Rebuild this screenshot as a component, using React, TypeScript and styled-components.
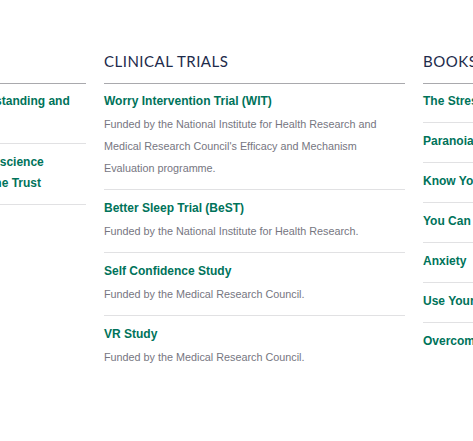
import React from "react";
import styled, { createGlobalStyle } from "styled-components";

const GlobalStyle = createGlobalStyle`
  html, body {
    margin: 0;
    padding: 0;
    background: #ffffff;
  }
  body {
    font-family: "Liberation Sans", Arial, sans-serif;
  }
`;

const Page = styled.div`
  width: 473px;
  height: 441px;
  overflow: hidden;
  background: #ffffff;
`;

const Columns = styled.div`
  display: flex;
  align-items: flex-start;
  gap: 18px;
  margin-left: -215px;
  padding-top: 51px;
  width: max-content;
`;

const Column = styled.section`
  width: 301px;
  flex: 0 0 301px;
`;

const Heading = styled.h2`
  margin: 0;
  padding-bottom: 12px;
  height: 20px;
  border-bottom: 1px solid #a9a9ad;
  font-family: Lato, "Open Sans", sans-serif;
  font-weight: 400;
  font-size: 15px;
  line-height: 20px;
  letter-spacing: 0.5px;
  color: #1d2b4b;
  text-transform: uppercase;
`;

const List = styled.ul`
  list-style: none;
  margin: 0;
  padding: 0;
`;

const Item = styled.li`
  padding: 8px 0 10px;
  border-bottom: 1px solid #e1e1e3;

  &:first-child {
    padding-top: 7px;
  }

  &:last-child {
    border-bottom: none;
  }
`;

const Title = styled.a`
  display: block;
  font-family: "Liberation Sans", Arial, sans-serif;
  font-weight: 700;
  font-size: 12px;
  line-height: 21px;
  color: #00735a;
  text-decoration: none;
`;

const Line = styled.span`
  display: block;
  white-space: nowrap;
`;

const Desc = styled.p`
  margin: 1px 0 0;
  font-family: "Liberation Sans", Arial, sans-serif;
  font-size: 10.8px;
  line-height: 22px;
  color: #76767f;
`;

type Entry = { title: string[]; desc?: string[] };

const leftItems: Entry[] = [
  { title: ["The Psychosis Research Unit: Understanding and", "treating paranoia"] },
  { title: ["Departments of Psychiatry and Neuroscience", "Funding by the Oxford Health Medicine Trust"] },
  { title: ["Contact"] },
];

const trials: Entry[] = [
  {
    title: ["Worry Intervention Trial (WIT)"],
    desc: [
      "Funded by the National Institute for Health Research and",
      "Medical Research Council's Efficacy and Mechanism",
      "Evaluation programme.",
    ],
  },
  {
    title: ["Better Sleep Trial (BeST)"],
    desc: ["Funded by the National Institute for Health Research."],
  },
  {
    title: ["Self Confidence Study"],
    desc: ["Funded by the Medical Research Council."],
  },
  {
    title: ["VR Study"],
    desc: ["Funded by the Medical Research Council."],
  },
];

const books: Entry[] = [
  { title: ["The Stressed Sex"] },
  { title: ["Paranoia: The 21st Century Fear"] },
  { title: ["Know Your Mind"] },
  { title: ["You Can Be Happy"] },
  { title: ["Anxiety"] },
  { title: ["Use Your Head"] },
  { title: ["Overcoming Paranoid and Suspicious Thoughts"] },
];

const Block: React.FC<{ heading: string; items: Entry[] }> = ({ heading, items }) => (
  <Column>
    <Heading>{heading}</Heading>
    <List>
      {items.map((it, i) => (
        <Item key={i}>
          <Title href="#">
            {it.title.map((t, j) => (
              <Line key={j}>{t}</Line>
            ))}
          </Title>
          {it.desc && (
            <Desc>
              {it.desc.map((d, j) => (
                <Line key={j}>{d}</Line>
              ))}
            </Desc>
          )}
        </Item>
      ))}
    </List>
  </Column>
);

export default function App() {
  return (
    <Page>
      <GlobalStyle />
      <Columns>
        <Block heading="Links" items={leftItems} />
        <Block heading="Clinical Trials" items={trials} />
        <Block heading="Books" items={books} />
      </Columns>
    </Page>
  );
}
